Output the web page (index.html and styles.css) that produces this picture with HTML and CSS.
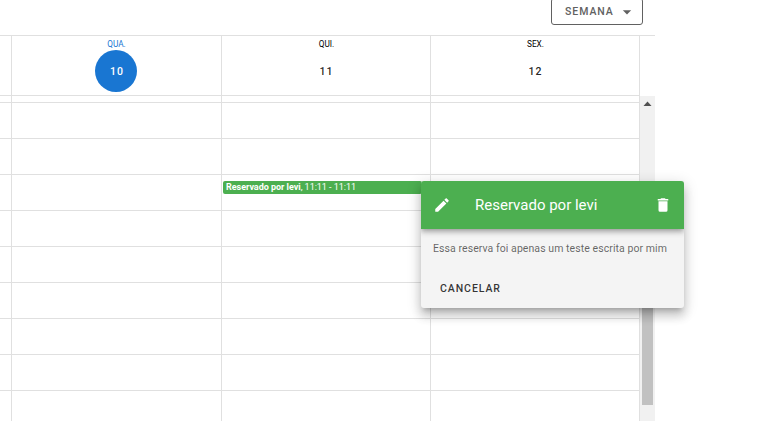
FILE: index.html
```html
<!DOCTYPE html>
<html lang="pt-BR">
<head>
<meta charset="utf-8">
<title>Reservas</title>
<link rel="stylesheet" href="styles.css">
</head>
<body>
<header class="toolbar">
  <button class="range-button"><span>SEMANA</span><svg width="20" height="20" viewBox="0 0 24 24"><path d="M7 10l5 5 5-5z"/></svg></button>
</header>
<main class="calendar">
  <div class="calendar-head">
    <div class="gutter"></div>
    <div class="day today"><span class="weekday">QUA.</span><span class="date">10</span></div>
    <div class="day"><span class="weekday">QUI.</span><span class="date">11</span></div>
    <div class="day"><span class="weekday">SEX.</span><span class="date">12</span></div>
  </div>
  <div class="calendar-body">
    <div class="days">
      <div class="column gutter"></div>
      <div class="column"></div>
      <div class="column">
        <div class="event"><strong>Reservado por levi</strong>, 11:11 - 11:11</div>
      </div>
      <div class="column"></div>
    </div>
    <div class="scrollbar">
      <svg class="arrow" width="15" height="15" viewBox="0 0 15 15"><path d="M3.5 10L7.5 5.5 11.5 10z"/></svg>
      <div class="thumb"></div>
    </div>
  </div>
</main>
<section class="popup">
  <div class="popup-bar">
    <svg class="pencil" width="18" height="18" viewBox="0 0 24 24"><path d="M20.71 7.04c.39-.39.39-1.04 0-1.41l-2.34-2.34c-.37-.39-1.02-.39-1.41 0l-1.84 1.83 3.75 3.75M3 17.25V21h3.75L17.81 9.93l-3.75-3.75L3 17.25z"/></svg>
    <h1>Reservado por levi</h1>
    <svg class="trash" width="18" height="18" viewBox="0 0 24 24"><path d="M19 4h-3.5l-1-1h-5l-1 1H5v2h14M6 19a2 2 0 0 0 2 2h8a2 2 0 0 0 2-2V7H6v12z"/></svg>
  </div>
  <p>Essa reserva foi apenas um teste escrita por mim</p>
  <button class="cancel">CANCELAR</button>
</section>
</body>
</html>
```
FILE: styles.css
```css
* { box-sizing: border-box; }
body {
  margin: 0;
  height: 421px;
  overflow: hidden;
  background: #fff;
  font-family: Roboto, "Liberation Sans", sans-serif;
  color: rgba(0, 0, 0, .87);
}
button {
  font-family: inherit;
  font-size: 10.5px;
  font-weight: 500;
  letter-spacing: .94px;
  padding: 0;
  background: none;
}
.toolbar { display: flex; align-items: flex-start; height: 35px; padding-left: 551px; }
.range-button {
  display: flex;
  align-items: center;
  justify-content: space-between;
  width: 92px;
  height: 27px;
  margin-top: -2px;
  padding: 0 5px 0 13px;
  border: 1px solid #616161;
  border-radius: 3px;
  color: #616161;
}
.range-button svg { fill: #616161; flex: none; }
.calendar { width: 655px; border-top: 1px solid #e0e0e0; }
.calendar-head {
  display: grid;
  grid-template-columns: 12px 210px 209px 209px;
  width: 640px;
  height: 60px;
}
.calendar-head > div { border: solid #e0e0e0; border-width: 0 1px 1px 0; }
.day { display: flex; flex-direction: column; align-items: center; }
.weekday {
  height: 14px;
  padding: 2px 0 0 1px;
  font-size: 8.25px;
  line-height: 12px;
  color: #000;
}
.date {
  width: 42px;
  height: 42px;
  border-radius: 50%;
  text-align: center;
  font-size: 10.5px;
  line-height: 43px;
  font-weight: 500;
  letter-spacing: .94px;
  padding-left: 1px;
}
.today { padding-right: 1px; }
.today .weekday { color: #1976d2; }
.today .date { background: #1976d2; color: #fff; padding-left: 2px; }
.calendar-body { display: flex; height: 325px; }
.days {
  display: grid;
  grid-template-columns: 12px 210px 209px 209px;
  width: 640px;
}
.column {
  display: flow-root;
  border-right: 1px solid #e0e0e0;
  background: repeating-linear-gradient(#e0e0e0 0 1px, transparent 1px 36px) 0 6px no-repeat;
}
.event {
  width: 199px;
  height: 13px;
  margin: 85px 0 0 1px;
  padding-left: 3px;
  border-radius: 2px;
  background: #4caf50;
  color: #fff;
  font-size: 9px;
  line-height: 12px;
  letter-spacing: -.02px;
  white-space: nowrap;
}
.scrollbar {
  display: flex;
  flex-direction: column;
  align-items: center;
  width: 15px;
  background: #f1f1f1;
}
.arrow { fill: #505050; }
.thumb { width: 11px; height: 150px; margin-top: 144px; background: #c1c1c1; }
.popup {
  position: absolute;
  left: 421px;
  top: 181px;
  width: 263px;
  height: 127px;
  border-radius: 3px;
  background: #f4f4f4;
  box-shadow: 0 5px 5px -3px rgba(0,0,0,.2), 0 8px 10px 1px rgba(0,0,0,.14), 0 3px 14px 2px rgba(0,0,0,.12);
}
.popup-bar {
  display: flex;
  align-items: center;
  height: 48px;
  padding: 0 12.5px 0 12px;
  border-radius: 3px 3px 0 0;
  background: #4caf50;
  color: #fff;
  box-shadow: 0 2px 4px -1px rgba(0,0,0,.2), 0 4px 5px rgba(0,0,0,.14), 0 1px 10px rgba(0,0,0,.12);
  clip-path: inset(0 0 -12px 0);
}
.popup-bar svg { fill: #fff; flex: none; }
.popup h1 { flex: 1; margin: 0 0 0 24px; font-size: 15px; font-weight: 400; line-height: 20px; }
.popup p {
  margin: 12px 0 0 12px;
  font-size: 10.5px;
  line-height: 16px;
  letter-spacing: .07px;
  color: rgba(0, 0, 0, .6);
  white-space: nowrap;
}
.cancel { display: block; border: 0; margin: 25px 0 0 19px; line-height: 14px; color: rgba(0, 0, 0, .8); }
```
